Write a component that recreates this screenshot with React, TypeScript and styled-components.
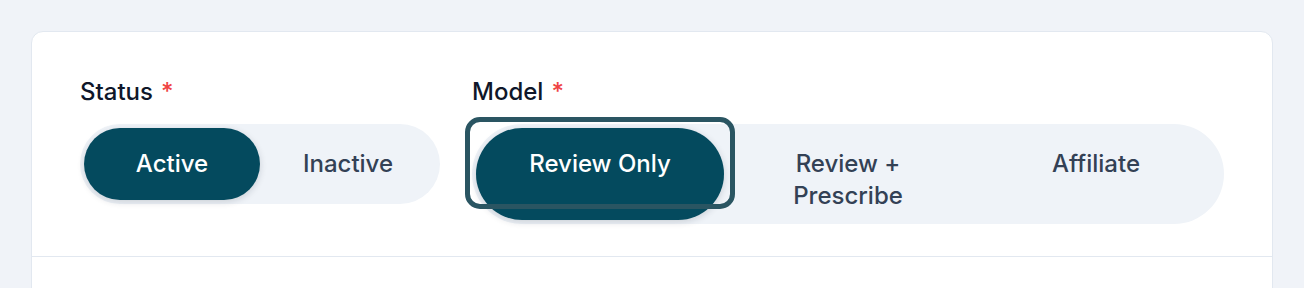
import React, { useState } from 'react';
import styled, { createGlobalStyle } from 'styled-components';

const GlobalStyle = createGlobalStyle`
  * { box-sizing: border-box; }
  body {
    margin: 0;
    background: #f0f3f8;
    font-family: Inter, "Noto Sans", sans-serif;
    -webkit-font-smoothing: antialiased;
  }
`;

const Page = styled.div`
  padding: 31px;
`;

const Card = styled.div`
  background: #ffffff;
  border: 1px solid #e2e8f0;
  border-radius: 12px;
  overflow: hidden;
`;

const Header = styled.div`
  display: grid;
  grid-template-columns: 360px 1fr;
  column-gap: 32px;
  align-items: start;
  padding: 44px 48px 32px;
  border-bottom: 1px solid #e2e8f0;
`;

const Body = styled.div`
  min-height: 120px;
`;

const Field = styled.div`
  display: flex;
  flex-direction: column;
`;

const Label = styled.label`
  font-size: 24px;
  line-height: 32px;
  font-weight: 450;
  color: #0f172a;
  margin-bottom: 16px;

  .req {
    color: #ef4444;
    margin-left: 8px;
  }
`;

interface TrackProps {
  $cols: number;
  $height?: number;
}

const Track = styled.div<TrackProps>`
  display: grid;
  grid-template-columns: repeat(${p => p.$cols}, 1fr);
  grid-template-rows: minmax(0, 1fr);
  padding: 4px;
  border-radius: 999px;
  background: #eff3f8;
  ${p => p.$height ? `height: ${p.$height}px;` : ''}
`;

interface OptionProps {
  $selected: boolean;
  $ring?: boolean;
}

const Option = styled.button<OptionProps>`
  position: relative;
  display: flex;
  justify-content: center;
  align-items: flex-start;
  border: none;
  margin: 0;
  padding: 20px 16px;
  border-radius: 999px;
  font-family: inherit;
  font-size: 24px;
  line-height: 32px;
  font-weight: 450;
  text-align: center;
  cursor: pointer;
  background: ${p => p.$selected ? '#044a5e' : 'transparent'};
  color: ${p => p.$selected ? '#ffffff' : '#334155'};
  box-shadow: ${p => p.$selected ? '0 2px 7px rgba(15, 23, 42, 0.16)' : 'none'};
  outline: none;

  ${p => p.$ring ? `
    &::after {
      content: '';
      position: absolute;
      top: -11px;
      bottom: 11px;
      left: -11px;
      right: -11px;
      border: 5px solid #2a5562;
      border-radius: 15px;
      pointer-events: none;
    }
  ` : ''}
`;

const statusOptions = ['Active', 'Inactive'];
const modelOptions = ['Review Only', 'Review + Prescribe', 'Affiliate'];

const App = () => {
  const [status, setStatus] = useState('Active');
  const [model, setModel] = useState('Review Only');

  return (
    <Page>
      <GlobalStyle />
      <Card>
        <Header>
          <Field>
            <Label>Status<span className="req">*</span></Label>
            <Track $cols={2}>
              {statusOptions.map(o => (
                <Option key={o} $selected={status === o} onClick={() => setStatus(o)}>
                  <span>{o}</span>
                </Option>
              ))}
            </Track>
          </Field>
          <Field>
            <Label>Model<span className="req">*</span></Label>
            <Track $cols={3} $height={100}>
              {modelOptions.map(o => (
                <Option
                  key={o}
                  $selected={model === o}
                  $ring={model === o}
                  onClick={() => setModel(o)}
                >
                  <span>{o === 'Review + Prescribe' ? <>Review +<br />Prescribe</> : o}</span>
                </Option>
              ))}
            </Track>
          </Field>
        </Header>
        <Body />
      </Card>
    </Page>
  );
};

export default App;
